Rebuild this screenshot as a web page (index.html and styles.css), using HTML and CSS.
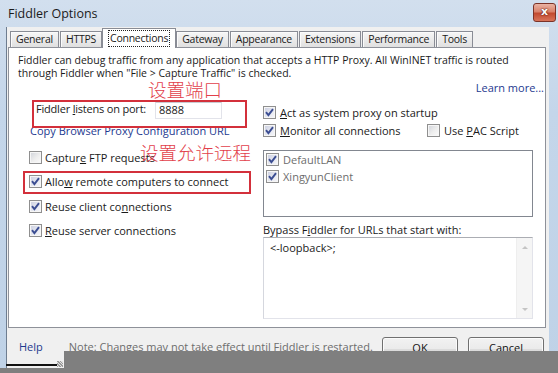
FILE: index.html
```html
<!DOCTYPE html>
<html>
<head>
<meta charset="utf-8">
<title>Fiddler Options</title>
<link rel="stylesheet" href="styles.css">
</head>
<body>
<div class="window">
  <div class="titlebar">
    <span class="title">Fiddler Options</span>
    <span class="close">x</span>
  </div>
  <div class="dlg">
    <div class="tabs">
      <span class="tab">General</span>
      <span class="tab">HTTPS</span>
      <span class="tab active"><span class="focus">Connections</span></span>
      <span class="tab">Gateway</span>
      <span class="tab">Appearance</span>
      <span class="tab">Extensions</span>
      <span class="tab">Performance</span>
      <span class="tab">Tools</span>
    </div>
    <div class="panel">
      <p class="intro">Fiddler can debug traffic from any application that accepts a HTTP Proxy. All WinINET traffic is routed<br>through Fiddler when "File &gt; Capture Traffic" is checked.</p>
      <div class="learn"><span class="link">Learn more...</span></div>
      <div class="cols">
        <div class="left">
          <div class="port-row">
            <span class="port-label">Fiddler <u>l</u>istens on port:</span>
            <span class="input">8888</span>
          </div>
          <div class="link copy">Copy Browser Proxy Configuration URL</div>
          <div class="check first"><span class="cb"></span><span>Captur<u>e</u> FTP requests</span></div>
          <div class="check r2"><span class="cb on"><svg viewBox="0 0 11 11" width="11" height="11"><path d="M2 5.2 L4.4 8.2 L9 2.2" fill="none" stroke="#3b4d92" stroke-width="1.9"/></svg></span><span>Allo<u>w</u> remote computers to connect</span></div>
          <div class="check r3"><span class="cb on"><svg viewBox="0 0 11 11" width="11" height="11"><path d="M2 5.2 L4.4 8.2 L9 2.2" fill="none" stroke="#3b4d92" stroke-width="1.9"/></svg></span><span>Reuse client co<u>n</u>nections</span></div>
          <div class="check r4"><span class="cb on"><svg viewBox="0 0 11 11" width="11" height="11"><path d="M2 5.2 L4.4 8.2 L9 2.2" fill="none" stroke="#3b4d92" stroke-width="1.9"/></svg></span><span><u>R</u>euse server connections</span></div>

          <div class="mark mark-port"></div>
          <div class="mark mark-remote"></div>
          <div class="note-cn cn-port">设置端口</div>
          <div class="note-cn cn-remote">设置允许远程</div>
        </div>
        <div class="right">
          <div class="check act"><span class="cb on"><svg viewBox="0 0 11 11" width="11" height="11"><path d="M2 5.2 L4.4 8.2 L9 2.2" fill="none" stroke="#3b4d92" stroke-width="1.9"/></svg></span><span><u>A</u>ct as system proxy on startup</span></div>
          <div class="monitor-row">
            <div class="check mon"><span class="cb on"><svg viewBox="0 0 11 11" width="11" height="11"><path d="M2 5.2 L4.4 8.2 L9 2.2" fill="none" stroke="#3b4d92" stroke-width="1.9"/></svg></span><span><u>M</u>onitor all connections</span></div>
            <div class="check"><span class="cb"></span><span>Use <u>P</u>AC Script</span></div>
          </div>
          <div class="listbox">
            <div class="item"><span class="cb on"><svg viewBox="0 0 11 11" width="11" height="11"><path d="M2 5.2 L4.4 8.2 L9 2.2" fill="none" stroke="#3b4d92" stroke-width="1.9"/></svg></span><span>DefaultLAN</span></div>
            <div class="item"><span class="cb on"><svg viewBox="0 0 11 11" width="11" height="11"><path d="M2 5.2 L4.4 8.2 L9 2.2" fill="none" stroke="#3b4d92" stroke-width="1.9"/></svg></span><span>XingyunClient</span></div>
          </div>
          <div class="bypass-label">Bypass F<u>i</u>ddler for URLs that start with:</div>
          <div class="textarea">
            <div class="ta-text">&lt;-loopback&gt;;</div>
            <div class="scroll"><span class="arr up"></span><span class="arr down"></span></div>
          </div>
        </div>
      </div>
    </div>
    <div class="footer">
      <span class="link help">Help</span>
      <span class="note">Note: Changes may not take effect until Fiddler is restarted.</span>
      <span class="btn ok">OK</span>
      <span class="btn cancel">Cancel</span>
    </div>
  </div>
  <div class="shade shade-main"></div>
  <div class="shade shade-bottom"></div>
  <div class="sel-line"></div>
  <div class="grip"></div>
</div>
</body>
</html>
```

FILE: styles.css
```css
* { box-sizing: border-box; }
html, body { margin: 0; padding: 0; }
body {
  width: 558px;
  height: 373px;
  overflow: hidden;
  font-family: "Open Sans", "Noto Sans", sans-serif;
  font-size: 11px;
  letter-spacing: 0;
  color: #1a1a1a;
}
u { text-decoration: underline; text-underline-offset: 1px; }

.window {
  position: relative;
  width: 558px;
  height: 373px;
  background: linear-gradient(180deg, #d2dfee 0%, #c4d6ea 30%, #bfd2e7 100%);
  display: flex;
  flex-direction: column;
}

.titlebar {
  height: 27px;
  flex: none;
  display: flex;
  align-items: center;
  padding-left: 8px;
}
.title {
  font-size: 12.5px;
  color: #1b1b1b;
  margin-top: -1px;
}
.close {
  margin-left: auto;
  margin-right: 2px;
  margin-top: -3px;
  width: 23px;
  height: 19px;
  border: 1px solid #7b3328;
  border-radius: 3px;
  background: linear-gradient(180deg, #eab3a3 0%, #d9826c 45%, #c24a30 55%, #d8745a 100%);
  color: #fff;
  font-family: "DejaVu Sans", sans-serif;
  font-weight: bold;
  font-size: 11px;
  line-height: 16px;
  text-align: center;
  text-shadow: 0 0 2px #5a1a10, 0 0 1px #5a1a10;
}

.dlg {
  flex: 1;
  margin: 0 9px 0 6px;
  background: #f0f0f0;
  border-left: 1px solid #6e7d90;
  display: flex;
  flex-direction: column;
}

.tabs {
  height: 20px;
  flex: none;
  display: flex;
  align-items: flex-end;
  gap: 1px;
  padding-left: 3px;
  position: relative;
  z-index: 2;
  font-size: 10.5px;
  letter-spacing: -0.25px;
}
.tab {
  height: 16px;
  padding: 0 5px;
  border: 1px solid #898c95;
  border-bottom: none;
  background: linear-gradient(180deg, #f6f6f6 0%, #ebebeb 50%, #e0e0e0 100%);
  box-shadow: inset 1px 1px 0 #fbfbfb;
  line-height: 15px;
  white-space: nowrap;
}
.tab.active {
  height: 20px;
  margin: 0 -1px -1px -1px;
  padding: 2px 6px 0 6px;
  background: #ffffff;
  box-shadow: none;
  line-height: 13px;
}
.focus {
  display: inline-block;
  outline: 1px dotted #222;
  outline-offset: 0;
  padding: 0 1px;
  line-height: 15px;
}

.panel {
  flex: none;
  height: 281px;
  margin: 0 3px 0 1px;
  border: 1px solid #8e9199;
  background: #ffffff;
  padding: 6px 1px 0 9px;
  display: flex;
  flex-direction: column;
}
.intro {
  margin: 0;
  font-size: 10.5px;
  line-height: 13px;
  color: #1a1a1a;
}
.learn {
  margin-top: 1px;
  line-height: 13px;
  text-align: right;
}
.link { color: #1e3a8f; }

.cols {
  display: grid;
  grid-template-columns: 234px 270px;
  margin-left: 11px;
}
.left {
  position: relative;
  display: flex;
  flex-direction: column;
}
.right {
  display: flex;
  flex-direction: column;
}

.port-row {
  margin-top: 8px;
  height: 17px;
  display: flex;
  padding-left: 7px;
}
.port-label {
  flex: 0 0 119px;
  line-height: 14px;
  letter-spacing: -0.2px;
}
.input {
  width: 67px;
  height: 17px;
  border: 1px solid #e2e3ea;
  border-top-color: #c9cbd2;
  padding-left: 3px;
  line-height: 14px;
}
.copy {
  margin-top: 5px;
  margin-left: 1px;
  line-height: 13px;
}

.check {
  display: flex;
  align-items: center;
  height: 13px;
  line-height: 13px;
  gap: 3px;
  white-space: nowrap;
}
.check.first { margin-top: 14px; }
.check.r2 { margin-top: 11px; }
.check.r3 { margin-top: 12px; }
.check.r4 { margin-top: 11px; }
.check.act { margin-top: 12px; gap: 4px; }

.cb {
  flex: none;
  width: 13px;
  height: 13px;
  border: 1px solid #8f8f8f;
  background: linear-gradient(135deg, #d0d3da 0%, #eeeeee 55%, #fbfbfb 100%);
  box-shadow: inset 0 0 0 1px #f6f6f6;
  display: flex;
  align-items: center;
  justify-content: center;
}
.cb.on {
  background: linear-gradient(135deg, #c9cde0 0%, #e6e8f0 55%, #f7f7fb 100%);
}
.cb svg { display: block; }

.monitor-row {
  margin-top: 5px;
  display: flex;
}
.check.mon {
  flex: 0 0 164px;
  gap: 4px;
}
.monitor-row .check { gap: 4px; }

.listbox {
  margin-top: 13px;
  height: 67px;
  border: 1px solid #828790;
  padding: 2px 0 0 2px;
  display: flex;
  flex-direction: column;
}
.item {
  height: 17px;
  display: flex;
  align-items: flex-start;
  gap: 4px;
  color: #6d6d6d;
  line-height: 13px;
}
.bypass-label {
  margin-top: 6px;
  line-height: 13px;
}
.textarea {
  margin-top: 1px;
  height: 82px;
  border: 1px solid #e2e3ea;
  border-top-color: #abadb3;
  border-left-color: #d5d7de;
  display: flex;
}
.ta-text {
  flex: 1;
  padding: 3px 0 0 6px;
  line-height: 13px;
}
.scroll {
  flex: 0 0 16px;
  background: #f5f5f5;
  border-left: 1px solid #eeeeee;
  display: flex;
  flex-direction: column;
  justify-content: space-between;
  align-items: center;
  padding: 8px 0 7px;
}
.arr {
  width: 0;
  height: 0;
  border-left: 3px solid transparent;
  border-right: 3px solid transparent;
}
.arr.up { border-bottom: 3px solid #c4c4c4; }
.arr.down { border-top: 3px solid #c4c4c4; }

.mark {
  position: absolute;
  border: 2px solid #d3303b;
}
.mark-port { left: 3px; top: 6px; width: 215px; height: 28px; }
.mark-remote { left: -6px; top: 77px; width: 228px; height: 23px; }
.note-cn {
  position: absolute;
  font-family: "Noto Sans CJK SC", sans-serif;
  font-weight: 300;
  font-size: 18.5px;
  line-height: 17px;
  color: #e2404b;
  white-space: nowrap;
}
.cn-port { left: 119px; top: -13px; }
.cn-remote { left: 111px; top: 50px; }

.footer {
  flex: 1;
  display: flex;
  align-items: flex-start;
  padding: 9px 5px 0 12px;
}
.help { margin-top: 3px; line-height: 13px; }
.note {
  margin-top: 3px;
  margin-left: 26px;
  line-height: 13px;
  color: #6d6d6d;
}
.btn {
  width: 76px;
  height: 23px;
  border: 1px solid #707070;
  border-radius: 3px;
  background: linear-gradient(180deg, #f2f2f2 0%, #ebebeb 50%, #dddddd 51%, #cfcfcf 100%);
  box-shadow: inset 0 0 0 1px #fbfbfb;
  text-align: center;
  line-height: 20px;
  color: #111;
}
.btn.ok { margin-left: auto; }
.btn.cancel { margin-left: 10px; }

.shade {
  position: absolute;
  background: #7f7f7f;
}
.shade-main { left: 64px; top: 351px; right: 0; bottom: 0; }
.shade-bottom { left: 0; top: 368px; right: 0; bottom: 0; }
.sel-line {
  position: absolute;
  left: 6px;
  top: 364px;
  width: 52px;
  height: 2px;
  background: #111;
}
.grip {
  position: absolute;
  left: 57px;
  top: 361px;
  width: 6px;
  height: 6px;
  background: repeating-linear-gradient(45deg, #9a9a9a 0 1px, #e0e0e0 1px 2px);
}
```
